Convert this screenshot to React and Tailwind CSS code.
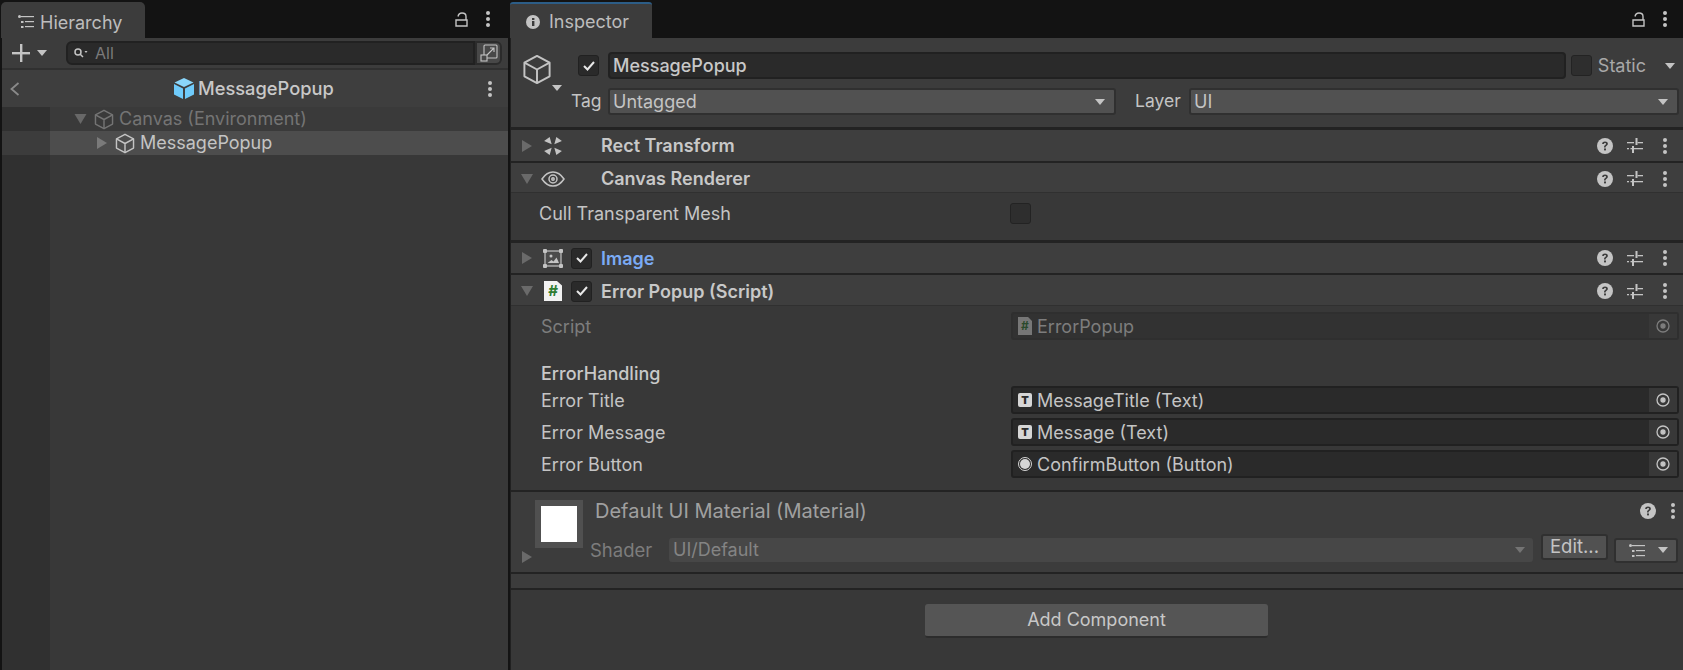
import React from "react";

const Arrow = ({ dir = "down", className = "" }) => (
  <svg viewBox="0 0 12 12" className={className} fill="currentColor">
    {dir === "down" ? <path d="M0 1h12L6 11z" /> : <path d="M1 0l10 6-10 6z" />}
  </svg>
);

const Caret = ({ className = "" }) => (
  <svg viewBox="0 0 10 6" className={`w-[10px] h-[6px] shrink-0 ${className}`} fill="currentColor">
    <path d="M0 0h10L5 6z" />
  </svg>
);

const Dots = ({ className = "" }) => (
  <svg viewBox="0 0 4 16" className={`w-[4px] h-[16px] shrink-0 text-[#c4c4c4] ${className}`} fill="currentColor">
    <circle cx="2" cy="2" r="2" />
    <circle cx="2" cy="8" r="2" />
    <circle cx="2" cy="14" r="2" />
  </svg>
);

const Lock = ({ className = "" }) => (
  <svg viewBox="0 0 13 15" className={`w-[13px] h-[15px] text-[#c4c4c4] ${className}`} fill="none" stroke="currentColor" strokeWidth="1.4">
    <path d="M1 8h11v6H1zM3 4.500C3.500 2 5 1 7 1c2.500 0 4 1.500 4 3.500V8" />
  </svg>
);

const ListIcon = ({ className = "" }) => (
  <svg viewBox="0 0 16 13" className={`w-[16px] h-[13px] shrink-0 text-[#c4c4c4] ${className}`} fill="currentColor">
    <circle cx="1.5" cy="1.5" r="1.5" />
    <rect x="3" y="1" width="13" height="1.2" />
    <rect x="3" y="6" width="2.5" height="2" />
    <rect x="7" y="6" width="9" height="1.2" />
    <rect x="3" y="11" width="2.5" height="2" />
    <rect x="7" y="11" width="9" height="1.2" />
  </svg>
);

const Cube = ({ className = "", strong = false }) => (
  <svg viewBox="0 0 30 32" className={className} fill="none" stroke="currentColor" strokeWidth={strong ? 2 : 2.2} strokeLinejoin="round">
    <path d="M15 2 28 9v14l-13 7-13-7V9z" />
    <path d="M2 9l13 7 13-7M15 16v14" />
  </svg>
);

const BlueCube = () => (
  <svg viewBox="0 0 20 21" className="w-[20px] h-[21px]">
    <path d="M10 0l9.5 4.5L10 9 .5 4.5z" fill="#8ad6fb" />
    <path d="M0 6l9 4.4V21L0 16.4z" fill="#6fcbfb" />
    <path d="M20 6l-9 4.4V21l9-4.6z" fill="#6fcbfb" />
  </svg>
);

const Help = () => (
  <svg viewBox="0 0 15 15" className="w-[16px] h-[16px] shrink-0">
    <circle cx="7.5" cy="7.5" r="7.5" fill="#c4c4c4" />
    <path d="M4.8 5.6c.1-1.6 1.3-2.3 2.7-2.3 1.5 0 2.7.8 2.7 2.2 0 1.1-.7 1.6-1.4 2-.5.4-.7.6-.7 1.3H6.6c0-1.2.3-1.7 1-2.2.6-.4.9-.6.9-1.1 0-.5-.4-.8-1-.8s-1 .4-1.1 1z" fill="#3c3c3c" />
    <rect x="6.6" y="9.8" width="1.8" height="1.8" fill="#3c3c3c" />
  </svg>
);

const Sliders = () => (
  <svg viewBox="0 0 16 15" className="w-[16px] h-[15px] shrink-0 text-[#c4c4c4]" fill="currentColor">
    <rect x="0" y="4" width="7" height="1.3" />
    <rect x="8.5" y="0" width="2" height="7" />
    <rect x="10.5" y="4" width="5.5" height="1.3" />
    <rect x="0" y="10" width="2" height="1.3" />
    <rect x="3.5" y="10" width="12.5" height="1.3" />
    <rect x="5" y="8" width="2" height="7" />
  </svg>
);

const RectIcon = () => (
  <svg viewBox="0 0 18 18" className="w-[20px] h-[20px] shrink-0 text-[#c4c4c4]" fill="currentColor">
    <path d="M1 4.500 6 1l1.800 6.500zM17 4.500 12 1l-1.800 6.500zM1 13.500 6 17l1.800-6.500zM17 13.500 12 17l-1.800-6.500z" />
  </svg>
);

const EyeIcon = () => (
  <svg viewBox="0 0 24 16" className="w-[24px] h-[16px] shrink-0 text-[#c4c4c4]" fill="none" stroke="currentColor" strokeWidth="1.5">
    <path d="M1 8c3-4.500 6.500-7 11-7s8 2.500 11 7c-3 4.500-6.500 7-11 7S4 12.500 1 8z" />
    <circle cx="12" cy="8" r="4" />
    <circle cx="12" cy="8" r="1.200" />
  </svg>
);

const ImageIcon = () => (
  <svg viewBox="0 0 20 19" className="w-[20px] h-[19px] shrink-0 text-[#c4c4c4]" fill="none" stroke="currentColor" strokeWidth="1.2">
    <rect x="2" y="2" width="16" height="15" fill="#4c4c4c" />
    <g fill="currentColor" stroke="none">
      <rect x="0" y="0" width="4" height="4" rx="1" />
      <rect x="16" y="0" width="4" height="4" rx="1" />
      <rect x="0" y="15" width="4" height="4" rx="1" />
      <rect x="16" y="15" width="4" height="4" rx="1" />
      <circle cx="8" cy="7" r="1.500" />
      <path d="M4.500 14l4-3 2 1.500 3-4 2.500 5.500z" />
    </g>
  </svg>
);

const Check = ({ className = "" }) => (
  <div className={`w-[21px] h-[21px] shrink-0 rounded-[3px] bg-[#2a2a2a] border border-[#212121] flex items-center justify-center ${className}`}>
    <svg viewBox="0 0 12 10" className="w-[12px] h-[10px]" fill="none" stroke="#e8e8e8" strokeWidth="2">
      <path d="M1 5l3.500 3.500L11 1" />
    </svg>
  </div>
);

const EmptyCheck = ({ className = "" }) => (
  <div className={`w-[21px] h-[21px] shrink-0 rounded-[3px] bg-[#2e2e2e] border border-[#232323] ${className}`} />
);

const ComponentRow = ({ open, icon, check, label, labelClass = "text-[#c8c8c8]", h = "h-[30px]", border }) => (
  <div className={`${h} flex items-center bg-[#3e3e3e] ${border || ""}`}>
    <div className="w-[32px] shrink-0 pl-[10px]">
      <Arrow dir={open ? "down" : "right"} className="w-[12px] h-[12px] text-[#6a6a6a]" />
    </div>
    <div className="w-[20px] shrink-0 flex justify-center">{icon}</div>
    <div className="w-[38px] shrink-0 pl-[8px]">{check && <Check />}</div>
    <span className={`text-[18px] font-semibold ${labelClass}`}>{label}</span>
    <div className="ml-auto flex items-center pr-[16px]">
      <Help />
      <div className="ml-[14px] mr-[20px]">
        <Sliders />
      </div>
      <Dots />
    </div>
  </div>
);

const Field = ({ icon, text, faded }) => (
  <div className={`flex-1 h-[28px] flex items-center rounded-[3px] border-[2px] ${faded ? "bg-[#323232] border-[#2f2f2f]" : "bg-[#2a2a2a] border-[#212121]"}`}>
    <div className="w-[5px]" />
    {icon}
    <span className={`ml-[5px] text-[18px] ${faded ? "text-[#7d7d7d]" : "text-[#c4c4c4]"}`}>{text}</span>
    <div className="ml-auto w-[28px] h-full flex items-center justify-center bg-[#383838]">
      <svg viewBox="0 0 14 14" className={`w-[14px] h-[14px] ${faded ? "text-[#7d7d7d]" : "text-[#c4c4c4]"}`} fill="none" stroke="currentColor" strokeWidth="1.300">
        <circle cx="7" cy="7" r="6" />
        <circle cx="7" cy="7" r="2" fill="currentColor" />
      </svg>
    </div>
  </div>
);

const PropRow = ({ label, icon, text, faded, labelClass = "text-[#c4c4c4]" }) => (
  <div className="flex items-center h-[28px]">
    <span className={`w-[500px] shrink-0 pl-[30px] text-[18px] ${labelClass}`}>{label}</span>
    <Field icon={icon} text={text} faded={faded} />
  </div>
);

const TextIcon = () => (
  <div className="w-[14px] h-[14px] shrink-0 bg-[#d6d6d6] rounded-[2px] flex items-center justify-center text-[#2a2a2a] text-[11px] font-black leading-none">
    T
  </div>
);

const ButtonIcon = () => (
  <div className="w-[14px] h-[14px] shrink-0 rounded-full border border-[#d6d6d6] flex items-center justify-center">
    <div className="w-[10px] h-[10px] rounded-full bg-[#d6d6d6]" />
  </div>
);

function Hierarchy() {
  return (
    <div className="w-[510px] shrink-0 flex flex-col pl-[2px] pr-[2px] bg-[#131313]">
      <div className="h-[38px] flex items-end -ml-[1px] relative">
        <div className="w-[144px] h-[36px] bg-[#3c3c3c] rounded-t-[5px] flex items-center pl-[17px]">
          <ListIcon className="translate-y-[1px]" />
          <span className="ml-[6px] text-[18px] text-[#bdbdbd] translate-y-[2px]">Hierarchy</span>
        </div>
        <div className="ml-auto flex items-center h-[38px] pr-[18px]">
          <Lock />
          <Dots className="ml-[18px]" />
        </div>
      </div>
      <div className="h-[32px] bg-[#3c3c3c] flex items-center border-b-[2px] border-[#303030]">
        <svg viewBox="0 0 18 18" className="w-[18px] h-[18px] ml-[10px] text-[#c4c4c4]" fill="currentColor">
          <rect x="8" y="0" width="2.400" height="18" />
          <rect x="0" y="8" width="18" height="2.400" />
        </svg>
        <Caret className="ml-[7px] text-[#c4c4c4]" />
        <div className="ml-[19px] w-[409px] h-[24px] rounded-l-[6px] bg-[#2a2a2a] border-[2px] border-[#212121] flex items-center pl-[6px]">
          <svg viewBox="0 0 14 10" className="w-[14px] h-[10px] text-[#c4c4c4]" fill="none" stroke="currentColor" strokeWidth="1.500">
            <circle cx="4" cy="4" r="3" />
            <path d="M6 6l3 3" />
            <path d="M10.500 3h3l-1.500 2z" fill="currentColor" stroke="none" />
          </svg>
          <span className="ml-[7px] text-[16px] text-[#7a7a7a]">All</span>
        </div>
        <div className="w-[27px] h-[24px] rounded-r-[6px] bg-[#484848] border-[2px] border-[#2b2b2b] flex items-center justify-center">
          <svg viewBox="0 0 18 18" className="w-[18px] h-[18px] text-[#c4c4c4]" fill="none" stroke="currentColor" strokeWidth="1.100">
            <path d="M4 11V2a1 1 0 0 1 1-1h11a1 1 0 0 1 1 1v11a1 1 0 0 1-1 1H7" />
            <rect x="1" y="11" width="6" height="6" />
            <path d="M7 11l7-7M10 4h4v4" />
          </svg>
        </div>
      </div>
      <div className="h-[37px] bg-[#3e3e3e] flex items-center relative">
        <svg viewBox="0 0 10 14" className="w-[10px] h-[14px] ml-[8px] text-[#8a8a8a]" fill="none" stroke="currentColor" strokeWidth="1.800">
          <path d="M8.500 1l-7 6 7 6" />
        </svg>
        <div className="flex items-center ml-[154px]">
          <BlueCube />
          <span className="ml-[4px] text-[18.300px] font-medium text-[#c8c8c8]">MessagePopup</span>
        </div>
        <Dots className="ml-auto mr-[16px]" />
      </div>
      <div className="flex-1 bg-[#383838] flex">
        <div className="w-[48px] bg-[#303030] flex flex-col">
          <div className="h-[24px]" />
          <div className="h-[24px] bg-[#3c3c3c]" />
        </div>
        <div className="flex-1 flex flex-col">
          <div className="h-[24px] bg-[#3a3a3a] flex items-center pl-[24px]">
            <Arrow dir="down" className="w-[13px] h-[12px] text-[#686868]" />
            <Cube className="w-[20px] h-[21px] ml-[7px] text-[#747474]" />
            <span className="ml-[5px] text-[18px] leading-[24px] text-[#747474]">Canvas (Environment)</span>
          </div>
          <div className="h-[24px] bg-[#4d4d4d] flex items-center pl-[46px]">
            <Arrow dir="right" className="w-[12px] h-[12px] text-[#7a7a7a]" />
            <Cube className="w-[20px] h-[21px] ml-[7px] text-[#c4c4c4]" />
            <span className="ml-[5px] text-[18px] leading-[24px] text-[#c4c4c4]">MessagePopup</span>
          </div>
        </div>
      </div>
    </div>
  );
}

function Inspector() {
  return (
    <div className="flex-1 flex flex-col min-w-0 bg-[#131313]">
      <div className="h-[38px] flex items-end">
        <div className="w-[142px] h-[36px] bg-[#3c3c3c] rounded-t-[3px] border-t-[2px] border-[#2c5d87] flex items-center pl-[16px]">
          <svg viewBox="0 0 14 14" className="w-[14px] h-[14px] translate-y-[1px]">
            <circle cx="7" cy="7" r="7" fill="#c4c4c4" />
            <rect x="6" y="6" width="2.400" height="5" fill="#3c3c3c" />
            <rect x="6" y="3" width="2.400" height="2" fill="#3c3c3c" />
          </svg>
          <span className="ml-[9px] text-[18px] text-[#bdbdbd]">Inspector</span>
        </div>
        <div className="ml-auto flex items-center h-[38px] pr-[16px]">
          <Lock />
          <Dots className="ml-[18px]" />
        </div>
      </div>

      <div className="flex-1 flex flex-col border-l-[1px] border-[#212121] bg-[#383838]">
        <div className="h-[89px] bg-[#3c3c3c] flex border-b-[3px] border-[#232323] box-content -mb-[3px]">
          <div className="w-[67px] shrink-0 relative pt-[16px] pl-[11px]">
            <Cube strong className="w-[30px] h-[31px] text-[#c4c4c4]" />
            <Caret className="absolute left-[41px] top-[47px] text-[#c4c4c4]" />
          </div>
          <div className="flex-1 flex flex-col pt-[14px] min-w-0">
            <div className="flex items-center h-[27px]">
              <Check />
              <div className="ml-[9px] flex-1 h-[27px] bg-[#2a2a2a] rounded-[4px] border-[2px] border-[#212121] flex items-center pl-[3px]">
                <span className="text-[18px] font-medium text-[#c8c8c8]">MessagePopup</span>
              </div>
              <EmptyCheck className="ml-[5px]" />
              <span className="ml-[6px] text-[18px] text-[#a8a8a8]">Static</span>
              <Caret className="ml-[19px] mr-[8px] text-[#c4c4c4]" />
            </div>
            <div className="flex items-center h-[27px] mt-[9px] -ml-[7px] pr-[4px]">
              <span className="w-[37px] text-[17.500px] text-[#c4c4c4]">Tag</span>
              <div className="w-[508px] h-[27px] bg-[#515151] rounded-[3px] border-[2px] border-[#303030] flex items-center pl-[3px] pr-[9px]">
                <span className="text-[18px] text-[#c4c4c4]">Untagged</span>
                <Caret className="ml-auto text-[#c4c4c4]" />
              </div>
              <span className="ml-[19px] w-[54px] text-[17.500px] text-[#c4c4c4]">Layer</span>
              <div className="flex-1 h-[27px] bg-[#515151] rounded-[3px] border-[2px] border-[#303030] flex items-center pl-[3px] pr-[9px]">
                <span className="text-[18px] text-[#c4c4c4]">UI</span>
                <Caret className="ml-auto text-[#c4c4c4]" />
              </div>
            </div>
          </div>
        </div>

        <div className="h-[3px] shrink-0" />
        <ComponentRow icon={<RectIcon />} label="Rect Transform" h="h-[33px]" border="border-b-[2px] border-[#232323]" />
        <ComponentRow open icon={<EyeIcon />} label="Canvas Renderer" h="h-[29px]" border="pt-[2px]" />
        <div className="h-[51px] bg-[#383838] border-b-[3px] border-t border-t-[#303030] border-[#232323] pt-[10px]">
          <div className="h-[21px] flex items-center">
            <span className="w-[499px] pl-[28px] text-[18px] text-[#c4c4c4]">Cull Transparent Mesh</span>
            <EmptyCheck />
          </div>
        </div>
        <ComponentRow icon={<ImageIcon />} check label="Image" labelClass="text-[#7babf5]" h="h-[32px]" border="border-b-[2px] border-[#232323]" />
        <ComponentRow
          open
          icon={
            <div className="w-[18px] h-[20px] shrink-0 bg-[#f2f2f2] text-[#2f7d32] text-[15px] font-bold flex items-center justify-center [clip-path:polygon(0_0,72%_0,100%_22%,100%_100%,0_100%)]">
              #
            </div>
          }
          check
          label="Error Popup (Script)"
          h="h-[30px]"
          border="pt-[2px]"
        />
        <div className="h-[187px] bg-[#383838] border-t border-[#303030] border-b-[2px] border-b-[#232323] flex flex-col">
          <div className="mt-[6px] pr-[4px]">
            <PropRow
              faded
              label="Script"
              labelClass="text-[#7d7d7d]"
              text="ErrorPopup"
              icon={
                <div className="w-[14px] h-[18px] shrink-0 bg-[#777777] text-[#2a4a2c] text-[12px] font-bold flex items-center justify-center [clip-path:polygon(0_0,72%_0,100%_22%,100%_100%,0_100%)]">
                  #
                </div>
              }
            />
          </div>
          <div className="pl-[30px] mt-[19px] h-[27px] flex items-center text-[18px] font-medium text-[#c8c8c8] translate-y-[1px]">ErrorHandling</div>
          <div className="flex flex-col gap-[4px] pr-[4px]">
            <PropRow label="Error Title" text="MessageTitle (Text)" icon={<TextIcon />} />
            <PropRow label="Error Message" text="Message (Text)" icon={<TextIcon />} />
            <PropRow label="Error Button" text="ConfirmButton (Button)" icon={<ButtonIcon />} />
          </div>
        </div>

        <div className="h-[82px] bg-[#3c3c3c] border-b-[2px] border-[#232323] flex">
          <div className="w-[24px] flex flex-col justify-end pb-[8px] pl-[10px] shrink-0">
            <Arrow dir="right" className="w-[12px] h-[14px] text-[#6a6a6a]" />
          </div>
          <div className="w-[48px] h-[48px] shrink-0 mt-[8px] bg-[#505050] flex items-center justify-center">
            <div className="w-[36px] h-[36px] bg-white" />
          </div>
          <div className="flex-1 flex flex-col pr-[4px] min-w-0">
            <div className="flex items-center pl-[12px] h-[30px] mt-[4px] pr-[4px]">
              <span className="text-[20px] text-[#a0a0a0]">Default UI Material (Material)</span>
              <div className="ml-auto flex items-center">
                <Help />
                <Dots className="ml-[15px]" />
              </div>
            </div>
            <div className="flex items-center h-[24px] mt-[12px] pl-[7px]">
              <span className="w-[79px] shrink-0 text-[18.500px] text-[#7d7d7d] translate-y-[1px]">Shader</span>
              <div className="w-[864px] h-[24px] shrink-0 rounded-[3px] bg-[#474747] flex items-center pl-[4px] pr-[8px]">
                <span className="text-[18px] text-[#848484] -translate-y-[1px]">UI/Default</span>
                <Caret className="ml-auto text-[#747474]" />
              </div>
              <div className="ml-[8px] w-[67px] h-[26px] shrink-0 -translate-y-[3px] rounded-[3px] bg-[#515151] border-[2px] border-[#303030] flex items-center justify-center text-[18.500px] text-[#c4c4c4]">
                Edit...
              </div>
              <div className="ml-[6px] w-[64px] h-[25px] shrink-0 rounded-[3px] bg-[#515151] border-[2px] border-[#303030] flex items-center pl-[13px]">
                <ListIcon />
                <Caret className="ml-auto mr-[8px] text-[#c4c4c4]" />
              </div>
            </div>
          </div>
        </div>

        <div className="h-[16px] bg-[#3c3c3c] border-b-[2px] border-[#232323]" />
        <div className="flex-1 flex justify-center pt-[14px] pr-[1px]">
          <div className="w-[343px] h-[34px] rounded-[3px] bg-[#555555] border-b-[2px] border-[#2c2c2c] flex items-center justify-center text-[18px] text-[#c8c8c8]">
            <span className="-translate-y-[1px]">Add Component</span>
          </div>
        </div>
      </div>
    </div>
  );
}

export default function App() {
  return (
    <div className="w-[1683px] h-[670px] flex overflow-hidden bg-[#131313] font-['Inter',sans-serif]">
      <Hierarchy />
      <Inspector />
    </div>
  );
}
